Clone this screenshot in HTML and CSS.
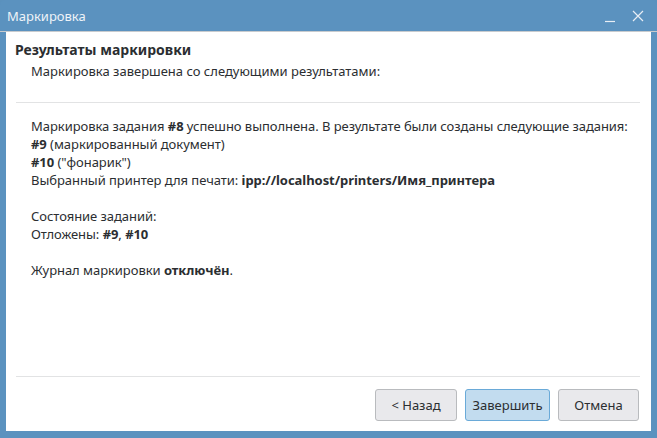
FILE: index.html
```html
<!DOCTYPE html>
<html lang="ru">
<head>
<meta charset="utf-8">
<title>Маркировка</title>
<link rel="stylesheet" href="styles.css">
</head>
<body>
<div class="window">
  <div class="titlebar">
    <span class="title">Маркировка</span>
    <div class="controls">
      <svg class="ctl" width="14" height="14" viewBox="0 0 14 14"><path d="M2 12.5h10" stroke="#e8eef5" stroke-width="1.2"/></svg>
      <svg class="ctl" width="14" height="14" viewBox="0 0 14 14"><path d="M2 2l10 10M12 2L2 12" stroke="#e8eef5" stroke-width="1.2"/></svg>
    </div>
  </div>
  <div class="content">
    <div class="header">
      <div class="h-title">Результаты маркировки</div>
      <div class="h-sub">Маркировка завершена со следующими результатами:</div>
    </div>
    <div class="sep"></div>
    <div class="body">
      <p>Маркировка задания <b>#8</b> успешно выполнена. В результате были созданы следующие задания:<br>
      <b>#9</b> (маркированный документ)<br>
      <b>#10</b> ("фонарик")<br>
      Выбранный принтер для печати: <b>ipp://localhost/printers/Имя_принтера</b></p>
      <p>Состояние заданий:<br>
      Отложены: <b>#9</b>, <b>#10</b></p>
      <p>Журнал маркировки <b>отключён</b>.</p>
    </div>
    <div class="sep"></div>
    <div class="buttons">
      <button class="btn back">&lt; Назад</button>
      <button class="btn default">Завершить</button>
      <button class="btn cancel">Отмена</button>
    </div>
  </div>
</div>
</body>
</html>
```
FILE: styles.css
```css
html, body {
  margin: 0;
  padding: 0;
  background: #5b91bd;
}
body {
  width: 657px;
  height: 438px;
  overflow: hidden;
  font-family: "Noto Sans", "Open Sans", sans-serif;
  font-size: 13px;
  color: #2b2e31;
}
.window {
  width: 657px;
  height: 438px;
  background: #5b92bf;
  border-radius: 5px 5px 0 0;
  display: flex;
  flex-direction: column;
  box-sizing: border-box;
}
.titlebar {
  height: 31px;
  border-bottom: 1px solid #c8cbce;
  display: flex;
  align-items: center;
  justify-content: space-between;
  padding: 0 12px 0 7px;
  color: #eef3f8;
}
.title {
  font-size: 13px;
  margin-top: 1px;
}
.controls {
  display: flex;
  gap: 14px;
  align-items: center;
  margin-top: 1px;
}
.content {
  flex: 1;
  background: #fff;
  margin: 0 6px 7px 6px;
  display: flex;
  flex-direction: column;
  padding: 0 11px 0 10px;
}
.header {
  padding-top: 9px;
  line-height: 18px;
  height: 61px;
}
.h-title {
  font-weight: bold;
  font-size: 14px;
  margin-left: -1px;
}
.h-sub {
  margin-top: 3px;
  padding-left: 15px;
}
.sep {
  height: 1px;
  background: #e2e3e4;
}
.body {
  flex: 1;
  padding: 14px 0 0 15px;
  line-height: 18px;
  letter-spacing: -0.05px;
}
.body p {
  margin: 0 0 18px 0;
}
.buttons {
  display: flex;
  justify-content: flex-end;
  gap: 8px;
  padding: 12px 1px 10px 0;
}
.btn {
  font-family: inherit;
  font-size: 13px;
  color: #2b2e31;
  height: 32px;
  padding: 0;
  background: #e9e9ec;
  border: 1px solid #b9bbbe;
  border-radius: 3px;
}
.btn.back { width: 82px; }
.btn.default {
  width: 85px;
  background: #c2dcef;
  border-color: #6aaad8;
}
.btn.cancel { width: 81px; }
```
